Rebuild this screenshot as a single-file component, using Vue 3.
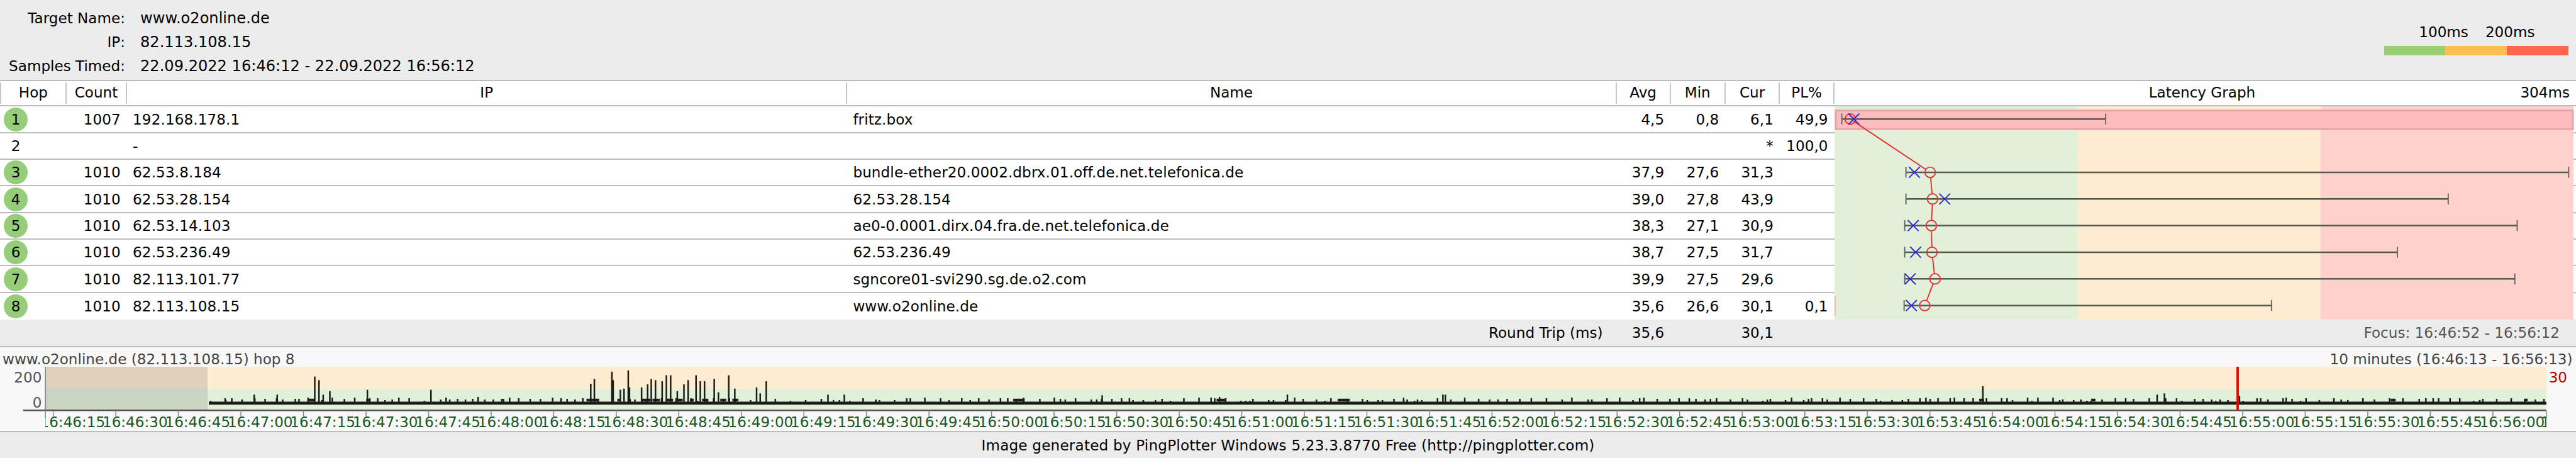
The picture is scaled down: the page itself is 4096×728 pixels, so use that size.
<script setup>
const info = [
  ['Target Name:', 'www.o2online.de'],
  ['IP:', '82.113.108.15'],
  ['Samples Timed:', '22.09.2022 16:46:12 - 22.09.2022 16:56:12'],
]
const heads = ['Hop', 'Count', 'IP', 'Name', 'Avg', 'Min', 'Cur', 'PL%']
const hops = [
  { hop: 1, ok: true, count: '1007', ip: '192.168.178.1', name: 'fritz.box', avg: '4,5', min: '0,8', cur: '6,1', pl: '49,9' },
  { hop: 2, ok: false, count: '', ip: '-', name: '', avg: '', min: '', cur: '*', pl: '100,0' },
  { hop: 3, ok: true, count: '1010', ip: '62.53.8.184', name: 'bundle-ether20.0002.dbrx.01.off.de.net.telefonica.de', avg: '37,9', min: '27,6', cur: '31,3', pl: '' },
  { hop: 4, ok: true, count: '1010', ip: '62.53.28.154', name: '62.53.28.154', avg: '39,0', min: '27,8', cur: '43,9', pl: '' },
  { hop: 5, ok: true, count: '1010', ip: '62.53.14.103', name: 'ae0-0.0001.dirx.04.fra.de.net.telefonica.de', avg: '38,3', min: '27,1', cur: '30,9', pl: '' },
  { hop: 6, ok: true, count: '1010', ip: '62.53.236.49', name: '62.53.236.49', avg: '38,7', min: '27,5', cur: '31,7', pl: '' },
  { hop: 7, ok: true, count: '1010', ip: '82.113.101.77', name: 'sgncore01-svi290.sg.de.o2.com', avg: '39,9', min: '27,5', cur: '29,6', pl: '' },
  { hop: 8, ok: true, count: '1010', ip: '82.113.108.15', name: 'www.o2online.de', avg: '35,6', min: '26,6', cur: '30,1', pl: '0,1' },
]

// Latency plot, in reference pixels
const marks = [
  { y: 197, min: 3043, avg: 3057, cur: 3063, max: 3479 },
  { y: 285, min: 3149, avg: 3189, cur: 3163, max: 4244 },
  { y: 329, min: 3149, avg: 3193, cur: 3213, max: 4045 },
  { y: 373, min: 3147, avg: 3191, cur: 3161, max: 4159 },
  { y: 417, min: 3147, avg: 3192, cur: 3165, max: 3961 },
  { y: 461, min: 3147, avg: 3197, cur: 3156, max: 4155 },
  { y: 505, min: 3146, avg: 3180, cur: 3158, max: 3753 },
]
const links = marks.slice(1).map((b, i) => {
  const a = marks[i]
  const dx = b.avg - a.avg
  const dy = b.y - a.y
  const len = Math.hypot(dx, dy)
  const r = i === 0 ? 5 : 9
  return {
    x1: a.avg + (dx / len) * r,
    y1: a.y + (dy / len) * r,
    x2: b.avg - (dx / len) * 9,
    y2: b.y - (dy / len) * 9,
  }
})

// Timeline
const ticks = []
for (let i = 0; i < 40; i++) {
  const total = 46 * 60 + 15 + i * 15
  const m = Math.floor(total / 60)
  const s = total % 60
  ticks.push({ x: 88 + i * 103.35, label: `16:${m}:${String(s).padStart(2, '0')}` })
}

const tall = [
  [372, 658], [420, 652], [458, 652], [520, 622], [527, 628], [534, 652], [545, 646], [607, 644], [611, 658],
  [712, 644], [769, 660], [790, 656], [829, 659], [976, 634], [982, 626], [1011, 614], [1013, 628], [1025, 644],
  [1031, 642], [1038, 612], [1040, 640], [1060, 640], [1070, 635], [1076, 626], [1083, 628], [1094, 630],
  [1101, 620], [1108, 620], [1119, 646], [1130, 635], [1137, 628], [1150, 620], [1157, 630], [1164, 630],
  [1180, 626], [1187, 648], [1204, 620], [1214, 642], [1250, 640], [1256, 650], [1266, 630], [1368, 652],
  [1395, 652], [1821, 653], [2015, 656], [2127, 652], [2388, 652], [2384, 652], [3276, 638],
  [3564, 652], [3576, 650], [3700, 654],
]
let seed = 7
const rnd = () => {
  seed = (seed * 16807) % 2147483647
  return seed / 2147483647
}
let spikePath = ''
for (let x = 348; x < 4206; x += 5 + rnd() * 22) {
  spikePath += `M${x.toFixed(0)} 666V${(662 - rnd() * 5).toFixed(0)}`
}
const bumps = [
  [969, 990], [1020, 1024], [1060, 1075], [1078, 1090], [1100, 1112], [1120, 1128], [1140, 1146], [1160, 1170],
  [1190, 1200], [1210, 1220], [1674, 1693], [2010, 2024], [2210, 2230], [3270, 3278], [3455, 3462],
  [3950, 3958], [4170, 4176], [510, 520], [605, 612],
]
const spikes = tall.map(([x, y]) => `M${x} 666V${y}`).join('') + spikePath
const raised = bumps.map(([a, b]) => `M${a} 661H${b}`).join('')
</script>

<template>
  <div class="page">
    <header class="top">
      <div class="info">
        <template v-for="row in info" :key="row[0]">
          <span class="info-key">{{ row[0] }}</span>
          <span class="info-val">{{ row[1] }}</span>
        </template>
      </div>
      <div class="legend">
        <div class="legend-text"><span>100ms</span><span>200ms</span></div>
        <div class="legend-bar">
          <i class="lg-green"></i><i class="lg-orange"></i><i class="lg-red"></i>
        </div>
      </div>
    </header>

    <div class="cols head">
      <span v-for="h in heads" :key="h" class="head-cell">{{ h }}</span>
      <div class="head-graph"><span></span><span>Latency Graph</span><span class="head-max">304ms</span></div>
    </div>

    <section class="rows">
      <div v-for="r in hops" :key="r.hop" class="cols row">
        <span class="hop"><b :class="{ badge: r.ok }">{{ r.hop }}</b></span>
        <span class="num">{{ r.count }}</span>
        <span class="txt">{{ r.ip }}</span>
        <span class="txt">{{ r.name }}</span>
        <span class="num">{{ r.avg }}</span>
        <span class="num">{{ r.min }}</span>
        <span class="num">{{ r.cur }}</span>
        <span class="num">{{ r.pl }}</span>
      </div>

      <svg class="plot" viewBox="3031 176 1225 352" preserveAspectRatio="none">
        <rect x="3031" y="176" width="401" height="352" fill="#e2f0d9" />
        <rect x="3432" y="176" width="402" height="352" fill="#ffecd0" />
        <rect x="3834" y="176" width="418" height="352" fill="#ffd0cc" />
        <rect x="3033" y="183" width="1218" height="30.5" fill="#ffbcbf" stroke="#e3a5a8" stroke-width="3" />
        <rect x="3031" y="489" width="2" height="33" fill="#f0b4b4" />
        <g v-for="m in marks" :key="m.y">
          <path :d="`M${m.min} ${m.y}H${m.max}`" stroke="#565a50" stroke-width="2.6" fill="none" />
          <path :d="`M${m.min} ${m.y - 9}V${m.y + 9}M${m.max} ${m.y - 9}V${m.y + 9}`" stroke="#666" stroke-width="2" fill="none" />
          <circle :cx="m.avg" :cy="m.y" r="8.6" fill="none" stroke="#e83434" stroke-width="2" />
          <path :d="`M${m.cur - 9} ${m.y - 9}L${m.cur + 9} ${m.y + 9}M${m.cur + 9} ${m.y - 9}L${m.cur - 9} ${m.y + 9}`" stroke="#2a2ad4" stroke-width="2" fill="none" />
        </g>
        <line v-for="(l, i) in links" :key="i" :x1="l.x1" :y1="l.y1" :x2="l.x2" :y2="l.y2" stroke="#e83434" stroke-width="2" />
      </svg>
    </section>

    <div class="cols trip">
      <span></span><span></span><span></span>
      <span class="trip-label">Round Trip (ms)</span>
      <span class="num">35,6</span>
      <span></span>
      <span class="num">30,1</span>
      <span></span>
      <span class="focus">Focus: 16:46:52 - 16:56:12</span>
    </div>

    <section class="panel">
      <div class="panel-title">
        <span>www.o2online.de (82.113.108.15) hop 8</span>
        <span>10 minutes (16:46:13 - 16:56:13)</span>
      </div>
      <svg class="chart" viewBox="0 606 4256 106" preserveAspectRatio="none">
        <defs>
          <clipPath id="timeline-clip"><rect x="75" y="606" width="4132" height="106" /></clipPath>
        </defs>
        <rect x="75" y="606" width="4132" height="36" fill="#ffecd0" />
        <rect x="75" y="642" width="4132" height="36" fill="#e2f0d9" />
        <rect x="75" y="606" width="268" height="72" fill="#808080" fill-opacity="0.25" />
        <rect x="345" y="663.6" width="3862" height="5" fill="#1c1c1c" />
        <path :d="spikes" stroke="#1c1c1c" stroke-width="2.6" fill="none" />
        <path :d="raised" stroke="#1c1c1c" stroke-width="4.4" fill="none" />
        <rect x="3695" y="606" width="4" height="72" fill="#f20000" />
        <path d="M75 606V678" stroke="#777" stroke-width="1.4" fill="none" />
        <path d="M38 678H4207" stroke="#555" stroke-width="2.6" fill="none" />
        <text x="69" y="631.5" text-anchor="end" class="ax">200</text>
        <text x="69" y="673.5" text-anchor="end" class="ax">0</text>
        <text x="4211" y="631.5" class="ax ax-red">30</text>
        <path d="M75 678V690M4207 678V690" stroke="#888" stroke-width="1.6" fill="none" />
        <g v-for="t in ticks" :key="t.label">
          <path :d="`M${t.x} 678V688`" stroke="#888" stroke-width="1.6" fill="none" />
        </g>
        <g clip-path="url(#timeline-clip)">
          <text v-for="t in ticks" :key="t.label" :x="t.x - 22" y="706" class="time">{{ t.label }}</text>
          <text x="4198" y="706" class="time">1</text>
        </g>
      </svg>
    </section>

    <footer class="foot">Image generated by PingPlotter Windows 5.23.3.8770 Free (http://pingplotter.com)</footer>
  </div>
</template>

<style scoped>
.page {
  width: 4096px;
  height: 728px;
  display: flex;
  flex-direction: column;
  background: #ececec;
  color: #000;
  font-family: "DejaVu Sans", Verdana, sans-serif;
  font-size: 23.1px;
  line-height: 28px;
  overflow: hidden;
}
.top {
  box-sizing: border-box;
  height: 128.96px;
  flex: none;
  display: flex;
  justify-content: space-between;
  border-bottom: 2px solid #bdbdbd;
  background: #ececec;
}
.info {
  display: grid;
  grid-template-columns: 199px auto;
  column-gap: 24px;
  grid-auto-rows: 38px;
  align-items: center;
  align-content: start;
  padding-top: 10px;
}
.info-key {
  text-align: right;
}
.info-val {
  font-size: 24.1px;
}
.legend {
  width: 292.6px;
  margin-right: 12.5px;
  padding-top: 37px;
  display: flex;
  flex-direction: column;
}
.legend-text {
  display: flex;
  justify-content: flex-end;
  gap: 27px;
  padding-right: 53px;
}
.legend-bar {
  display: flex;
  height: 15.4px;
  margin-top: 8px;
}
.legend-bar i {
  flex: 1;
}
.lg-green { background: #97cf72; }
.lg-orange { background: #ffbe50; }
.lg-red { background: #ff6650; }

.cols {
  display: grid;
  grid-template-columns: 105.9px 96.2px 1145.3px 1223.2px 86.1px 87.1px 86.6px 86.6px 1fr;
  align-items: center;
}
.head {
  box-sizing: border-box;
  height: 40.42px;
  flex: none;
  background: #fff;
  border-bottom: 2px solid #bdbdbd;
}
.head-cell {
  box-sizing: border-box;
  height: 34.6px;
  line-height: 32px;
  text-align: center;
  border-right: 2px solid #c8c8c8;
}
.head-cell:first-child {
  border-left: 2px solid #c8c8c8;
}
.head-graph {
  display: grid;
  grid-template-columns: 1fr auto 1fr;
  padding-right: 10px;
  line-height: 32px;
  height: 34.6px;
}
.head-max {
  text-align: right;
}

.rows {
  position: relative;
  flex: none;
  background: #fff;
}
.row {
  box-sizing: border-box;
  height: 42.35px;
  border-bottom: 2px solid #bdbdbd;
}
.row:last-of-type {
  border-bottom: 0;
}
.hop {
  display: flex;
  align-items: center;
  padding-left: 6px;
}
.hop b {
  font-weight: 400;
  width: 38px;
  height: 38px;
  line-height: 38px;
  text-align: center;
  border-radius: 50%;
}
.hop .badge {
  background: #96cd78;
}
.num {
  text-align: right;
  padding-right: 10.5px;
}
.txt {
  padding-left: 9px;
  white-space: nowrap;
  letter-spacing: 0.1px;
}
.plot {
  position: absolute;
  top: 0;
  left: 2917.1px;
  width: 1178.9px;
  height: 338.8px;
  display: block;
}

.trip {
  box-sizing: border-box;
  height: 44.27px;
  flex: none;
  background: #ececec;
  border-bottom: 2px solid #bdbdbd;
}
.trip-label {
  text-align: right;
  padding-right: 22px;
}
.focus {
  text-align: right;
  color: #555;
  padding-right: 26px;
}

.panel {
  box-sizing: border-box;
  height: 134.73px;
  flex: none;
  background: #f8f8f8;
  border-bottom: 2px solid #bdbdbd;
  display: flex;
  flex-direction: column;
}
.panel-title {
  height: 30.8px;
  flex: none;
  box-sizing: border-box;
  padding: 5px 5.5px 0 4px;
  display: flex;
  justify-content: space-between;
  color: #444;
  position: relative;
  z-index: 1;
}
.chart {
  display: block;
  width: 4096px;
  height: 102px;
  flex: none;
}
.ax {
  font-family: "DejaVu Sans", Verdana, sans-serif;
  font-size: 24px;
  fill: #555;
}
.ax-red {
  fill: #b80000;
}
.time {
  font-family: "DejaVu Sans", Verdana, sans-serif;
  font-size: 24px;
  fill: #1b5a1f;
}
.foot {
  flex: 1;
  display: flex;
  justify-content: center;
  align-items: center;
  background: #ececec;
  letter-spacing: 0.2px;
}
</style>
